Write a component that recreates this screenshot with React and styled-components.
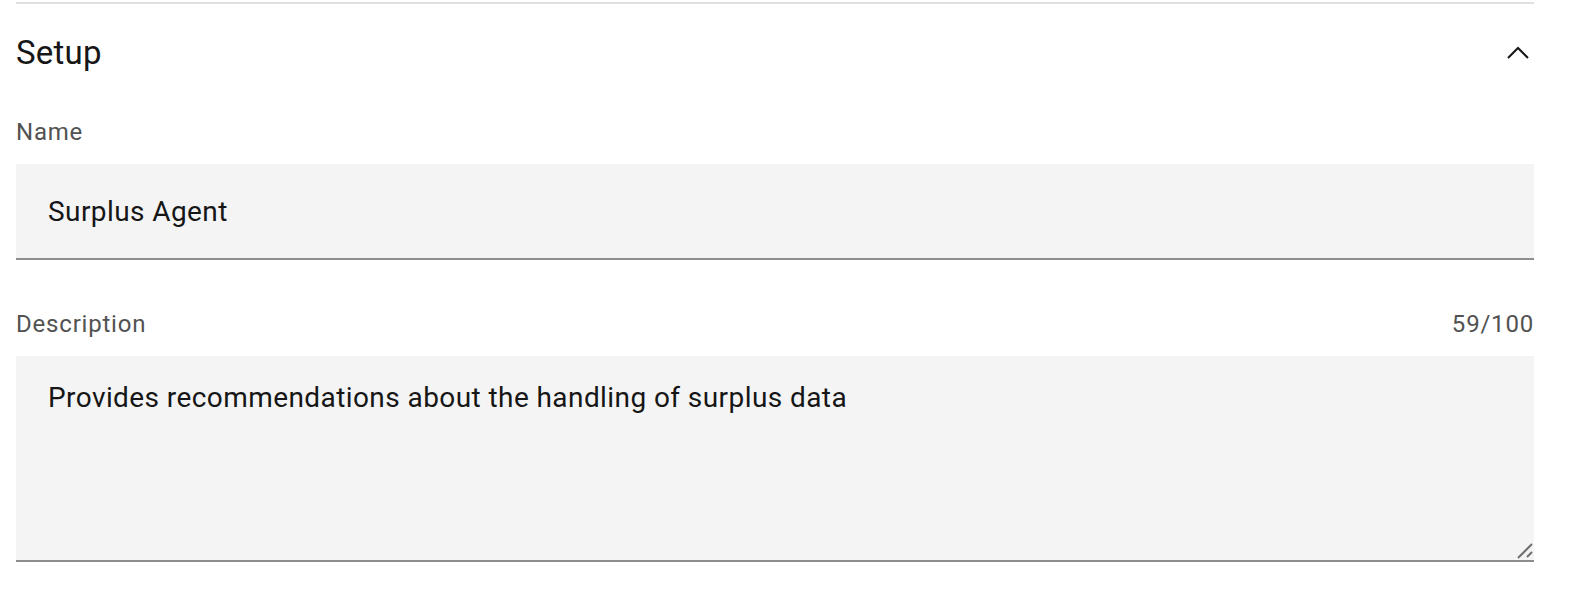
import React, { useState } from "react";
import styled, { createGlobalStyle } from "styled-components";

const GlobalStyle = createGlobalStyle`
  body {
    margin: 0;
    background: #ffffff;
    font-family: Roboto, "Noto Sans", "Liberation Sans", sans-serif;
    color: #161616;
  }
`;

const Page = styled.div`
  padding: 2px 40px 0 16px;
`;

const Section = styled.section`
  border-top: 2px solid #e0e0e0;
`;

const Header = styled.button`
  display: flex;
  align-items: center;
  justify-content: space-between;
  width: 100%;
  height: 97px;
  padding: 0;
  border: none;
  background: transparent;
  font-family: inherit;
  font-size: 33px;
  letter-spacing: 0.2px;
  color: #161616;
  cursor: pointer;
`;

const Chevron = styled.svg`
  width: 32px;
  height: 32px;
`;

const Content = styled.div`
  padding-top: 15px;
  display: flex;
  flex-direction: column;
  gap: 48px;
`;

const Field = styled.div`
  display: flex;
  flex-direction: column;
`;

const LabelRow = styled.div`
  display: flex;
  justify-content: space-between;
  margin-bottom: 16px;
`;

const Label = styled.label`
  font-size: 24px;
  line-height: 32px;
  letter-spacing: 0.8px;
  color: #525252;
`;

const Input = styled.input`
  box-sizing: border-box;
  width: 100%;
  height: 96px;
  padding: 0 32px;
  border: none;
  border-bottom: 2px solid #8d8d8d;
  background: #f4f4f4;
  font-family: inherit;
  font-size: 28px;
  letter-spacing: 0.42px;
  color: #161616;
  outline: none;
`;

const AreaWrap = styled.div`
  position: relative;
`;

const TextArea = styled.textarea`
  box-sizing: border-box;
  display: block;
  width: 100%;
  height: 206px;
  padding: 22px 32px;
  border: none;
  border-bottom: 2px solid #8d8d8d;
  background: #f4f4f4;
  font-family: inherit;
  font-size: 28px;
  line-height: 40px;
  letter-spacing: 0.42px;
  color: #161616;
  resize: vertical;
  outline: none;
`;

const Grip = styled.svg`
  position: absolute;
  right: 0;
  bottom: 2px;
  width: 20px;
  height: 20px;
  background: #f4f4f4;
  pointer-events: none;
`;

export default function App() {
  const [name, setName] = useState("Surplus Agent");
  const [description, setDescription] = useState(
    "Provides recommendations about the handling of surplus data"
  );

  return (
    <>
      <GlobalStyle />
      <Page>
        <Section>
          <Header>
            <span>Setup</span>
            <Chevron viewBox="0 0 32 32">
              <polyline
                points="6,21 16,11 26,21"
                fill="none"
                stroke="#161616"
                strokeWidth="2"
              />
            </Chevron>
          </Header>
          <Content>
            <Field>
              <LabelRow>
                <Label htmlFor="name">Name</Label>
              </LabelRow>
              <Input
                id="name"
                value={name}
                onChange={(e) => setName(e.target.value)}
              />
            </Field>
            <Field>
              <LabelRow>
                <Label htmlFor="description">Description</Label>
                <Label as="span">{description.length}/100</Label>
              </LabelRow>
              <AreaWrap>
                <TextArea
                  id="description"
                  value={description}
                  onChange={(e) => setDescription(e.target.value)}
                />
                <Grip viewBox="0 0 20 20">
                  <line x1="4" y1="18" x2="18" y2="4" stroke="#6f6f6f" strokeWidth="2" />
                  <line x1="13" y1="17" x2="18" y2="12" stroke="#6f6f6f" strokeWidth="2" />
                </Grip>
              </AreaWrap>
            </Field>
          </Content>
        </Section>
      </Page>
    </>
  );
}
